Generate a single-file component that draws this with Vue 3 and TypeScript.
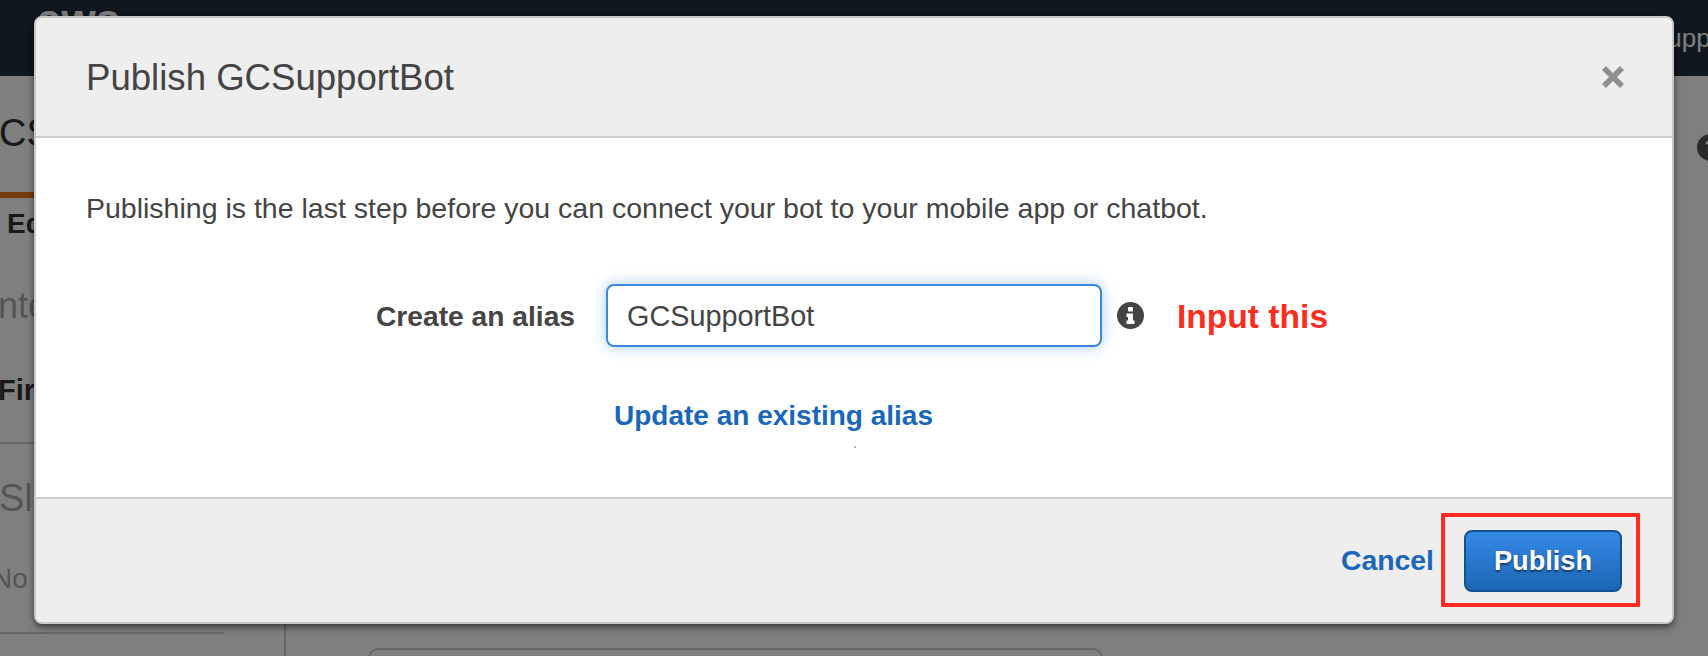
<script setup lang="ts">
const title = 'Publish GCSupportBot'
</script>

<template>
  <div class="page">
    <header class="topbar">
      <span class="logo">aws</span>
      <span class="support">Support</span>
    </header>
    <div class="content">
      <div class="side">
        <div class="bot">CS</div>
        <div class="tab"><span class="tab-mark"></span><b>Ed</b></div>
        <div class="heading">nte</div>
        <div class="first"><b>Firs</b></div>
        <div class="heading slot">Slo</div>
        <div class="none">No</div>
      </div>
      <div class="main"><span class="help">?</span><span class="field"></span></div>
    </div>

    <div class="backdrop"></div>

    <section class="modal">
      <div class="modal-head">
        <h2>{{ title }}</h2>
        <svg class="close" viewBox="0 0 22 22" width="22" height="22">
          <path d="M4 0 11 7 18 0 22 4 15 11 22 18 18 22 11 15 4 22 0 18 7 11 0 4Z" fill="#8f8f8f" />
        </svg>
      </div>
      <div class="modal-body">
        <p>Publishing is the last step before you can connect your bot to your mobile app or chatbot.</p>
        <div class="row">
          <label for="alias">Create an alias</label>
          <input id="alias" value="GCSupportBot" />
          <svg class="info" viewBox="0 0 27 27" width="27" height="27">
            <circle cx="13.5" cy="13.5" r="13.5" fill="#444" />
            <rect x="11" y="5" width="5" height="4.5" rx="1" fill="#fff" />
            <path d="M9.5 11.5H16V18.5H17.5V22H9.5V18.5H11V15H9.5Z" fill="#fff" />
          </svg>
          <span class="note">Input this</span>
        </div>
        <a class="update">Update an existing alias</a>
        <span class="speck"></span>
      </div>
      <div class="modal-foot">
        <a class="cancel">Cancel</a>
        <button class="publish">Publish</button>
        <span class="callout"></span>
      </div>
    </section>
  </div>
</template>

<style>
html, body { margin: 0; padding: 0; }
</style>

<style scoped>
.page {
  position: relative;
  width: 1708px;
  height: 656px;
  overflow: hidden;
  background: #fff;
  font-family: "Liberation Sans", Arial, sans-serif;
  color: #444;
}
.topbar {
  height: 76px;
  background: #232f3e;
  display: flex;
  justify-content: space-between;
  box-sizing: border-box;
  padding-left: 37px;
}
.logo { color: #fff; font-weight: 700; font-size: 44px; line-height: 44px; margin-top: -2px; }
.support { color: #fff; font-size: 26px; line-height: 32px; margin-top: 22px; margin-right: -33px; }
.content { display: flex; height: 580px; }
.side { width: 284px; border-right: 2px solid #ccc; box-sizing: content-box; height: 580px; overflow: hidden; color: #444; }
.bot { font-size: 38px; line-height: 48px; margin-top: 33px; margin-left: -1px; color: #333; }
.tab { height: 46px; margin-top: 35px; position: relative; }
.tab-mark { display: block; height: 6px; width: 100%; background: #ec7211; }
.tab b { display: block; margin-left: 7px; margin-top: 10px; font-size: 28px; line-height: 32px; color: #333; }
.heading { font-size: 36px; line-height: 42px; color: #aaa; margin-top: 47px; margin-left: -2px; }
.first { margin-top: 47px; margin-left: -2px; font-size: 29px; line-height: 32px; color: #333; padding-bottom: 36px; border-bottom: 2px solid #ccc; }
.slot { margin-top: 33px; margin-left: -1px; font-size: 38px; }
.none { font-size: 28px; line-height: 32px; color: #aaa; margin-left: -8px; margin-top: 44px; padding-bottom: 37px; border-bottom: 2px solid #ccc; width: 232px; }
.main { flex: 1; position: relative; }
.help {
  position: absolute;
  right: -16px;
  top: 58px;
  width: 27px;
  height: 27px;
  border-radius: 50%;
  background: #555;
  color: #fff;
  font-weight: 700;
  font-size: 20px;
  line-height: 27px;
  text-align: center;
}
.field { position: absolute; left: 82px; top: 572px; width: 731px; height: 40px; border: 2px solid #ccc; border-radius: 10px; }
.backdrop { position: absolute; inset: 0; background: rgba(0, 0, 0, 0.5); }

.modal {
  position: absolute;
  left: 34px;
  top: 16px;
  width: 1640px;
  height: 608px;
  box-sizing: border-box;
  border: 2px solid #c8c8c8;
  border-radius: 8px;
  background: #fff;
  box-shadow: 0 3px 7px rgba(0, 0, 0, 0.55);
  display: flex;
  flex-direction: column;
  overflow: hidden;
}
.modal-head {
  height: 120px;
  flex: none;
  box-sizing: border-box;
  background: #eee;
  border-bottom: 2px solid #ccc;
  display: flex;
  align-items: center;
  justify-content: space-between;
  padding: 2px 48px 0 50px;
}
.modal-head h2 { margin: 0; font-weight: 400; font-size: 36.6px; color: #444; line-height: 40px; }
.close { margin-top: -2px; }
.modal-body { flex: 1; padding: 52px 50px 0; position: relative; }
.modal-body p { margin: 0; font-size: 28.5px; line-height: 36px; color: #444; }
.row { display: flex; align-items: center; margin-top: 58px; height: 63px; }
.row label { font-weight: 700; font-size: 28.2px; color: #444; margin-left: 290px; width: 230px; flex: none; padding-top: 2px; }
.row input {
  width: 496px;
  height: 63px;
  flex: none;
  box-sizing: border-box;
  border: 2px solid #3b8ad9;
  border-radius: 8px;
  padding: 1px 19px 0;
  font: 400 28.8px "Liberation Sans", Arial, sans-serif;
  color: #444;
  outline: none;
  box-shadow: 0 0 14px rgba(59, 138, 217, 0.45);
}
.info { margin-left: 15px; flex: none; }
.note { margin-left: 33px; font-weight: 700; font-size: 33.6px; color: #ff2d20; padding-top: 2px; }
.update { display: block; margin: 51px 0 0 528px; font-weight: 700; font-size: 28px; line-height: 36px; color: #1a66b8; }
.speck { position: absolute; left: 818px; top: 308px; width: 2px; height: 2px; background: #bbb; }
.modal-foot {
  height: 125px;
  flex: none;
  box-sizing: border-box;
  background: #eee;
  border-top: 2px solid #ccc;
  display: flex;
  align-items: center;
  justify-content: flex-end;
  padding: 0 50px 0 0;
  position: relative;
}
.cancel { font-weight: 700; font-size: 28.4px; color: #1a66b8; margin-right: 30px; }
.publish {
  width: 158px;
  height: 62px;
  box-sizing: border-box;
  border: 2px solid #14518f;
  border-radius: 8px;
  background: linear-gradient(#3689e6, #1c66b4);
  color: #fff;
  font: 700 27.2px "Liberation Sans", Arial, sans-serif;
  text-shadow: 0 2px 2px rgba(0, 0, 0, 0.5);
  padding: 0;
}
.callout {
  position: absolute;
  left: 1405px;
  top: 14px;
  width: 199px;
  height: 94px;
  box-sizing: border-box;
  border: 4px solid #ff2d20;
}
</style>
